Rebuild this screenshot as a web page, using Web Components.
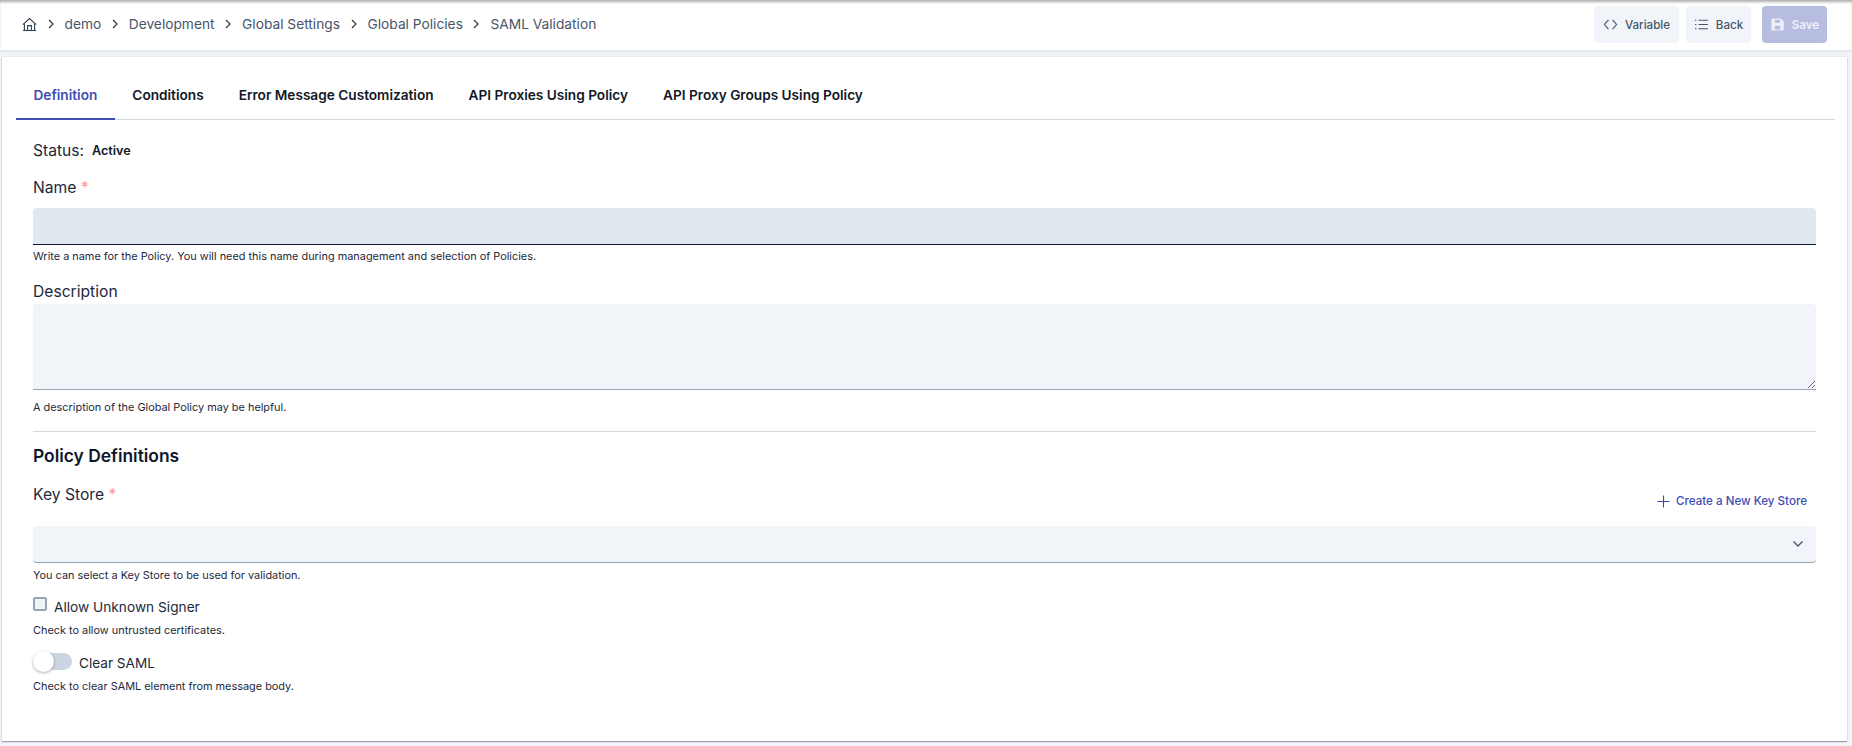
<!DOCTYPE html>
<html lang="en">
<head>
<meta charset="utf-8">
<title>SAML Validation</title>
<style>
  html, body { margin: 0; height: 100%; }
  body {
    background: #f1f5f9;
    font-family: Inter, "Liberation Sans", sans-serif;
    color: #0f172a;
    overflow: hidden;
  }
</style>
</head>
<body>
<policy-page>
  <top-bar slot="top">
    <bread-crumbs>
      <crumb-item>demo</crumb-item>
      <crumb-item>Development</crumb-item>
      <crumb-item>Global Settings</crumb-item>
      <crumb-item>Global Policies</crumb-item>
      <crumb-item>SAML Validation</crumb-item>
    </bread-crumbs>
    <tool-button slot="actions" icon="code" style="width:85px">Variable</tool-button>
    <tool-button slot="actions" icon="list" style="width:65px;margin-left:7px">Back</tool-button>
    <tool-button slot="actions" icon="save" primary style="width:65px;margin-left:11px">Save</tool-button>
  </top-bar>
  <tab-bar>
    <tab-item active>Definition</tab-item>
    <tab-item>Conditions</tab-item>
    <tab-item>Error Message Customization</tab-item>
    <tab-item>API Proxies Using Policy</tab-item>
    <tab-item>API Proxy Groups Using Policy</tab-item>
  </tab-bar>
  <policy-form>
    <status-line>Active</status-line>
    <form-field label="Name" required hint="Write a name for the Policy. You will need this name during management and selection of Policies." style="--top:17px;--gap:11px;--hint-top:4px">
      <text-input focused></text-input>
    </form-field>
    <form-field label="Description" hint="A description of the Global Policy may be helpful." style="--top:18px;--gap:3px;--hint-top:10px">
      <text-area></text-area>
    </form-field>
    <section-title>Policy Definitions</section-title>
    <form-field label="Key Store" required hint="You can select a Key Store to be used for validation." style="--top:18px;--gap:22px;--hint-top:5px">
      <add-link slot="aside">Create a New Key Store</add-link>
      <select-box></select-box>
    </form-field>
    <check-field hint="Check to allow untrusted certificates.">Allow Unknown Signer</check-field>
    <switch-field hint="Check to clear SAML element from message body.">Clear SAML</switch-field>
  </policy-form>
</policy-page>

<script>
const ICONS = {
  home: '<path d="M.8 7.6 7.5 1.5l6.7 6.1"/><path d="M2.4 6.4v7.1h10.2V6.4"/><path d="M1 13.5h13"/><path d="M5.6 13.5V8.6h3.8v4.9"/>',
  code: '<path d="M5.8 3 1.5 8l4.3 5"/><path d="M10.2 3l4.3 5-4.3 5"/>',
  list: '<path d="M4.8 3.5h10M4.8 8h10M4.8 12.5h10"/><path d="M1 3.5h1.6M1 8h1.6M1 12.5h1.6"/>',
  save: '<path fill="currentColor" stroke="none" fill-rule="evenodd" d="M3 1.5h8.6l3 3V13c0 .9-.7 1.5-1.5 1.5H3c-.9 0-1.5-.6-1.5-1.5V3c0-.9.6-1.5 1.5-1.5zM5.2 2.8v3.4h5.4V2.8zM5 9.2v4h6v-4z"/>'
};

class PolicyPage extends HTMLElement {
  constructor() {
    super();
    this.attachShadow({ mode: 'open' });
    this.shadowRoot.innerHTML = `
      <style>
        :host { display: block; }
        .card {
          margin: 7px 5px 0 2px;
          height: 684px;
          box-sizing: border-box;
          background: #fff;
          box-shadow: 0 1px 1px #9a9fa8, 0 0 2px #cbd5e1;
        }
      </style>
      <slot name="top"></slot>
      <div class="card"><slot></slot></div>`;
  }
}

class TopBar extends HTMLElement {
  constructor() {
    super();
    this.attachShadow({ mode: 'open' });
    this.shadowRoot.innerHTML = `
      <style>
        :host {
          display: flex;
          align-items: center;
          justify-content: space-between;
          height: 50px;
          box-sizing: border-box;
          padding: 0 25px 1px 22px;
          background: #fff;
          box-shadow: inset 0 3px 3px -1px #adadad, 0 1px 3px #d5dce5;
        }
        .actions { display: flex; align-items: center; }
      </style>
      <slot></slot>
      <div class="actions"><slot name="actions"></slot></div>`;
  }
}

class BreadCrumbs extends HTMLElement {
  constructor() {
    super();
    this.attachShadow({ mode: 'open' });
    this.shadowRoot.innerHTML = `
      <style>
        :host { display: flex; align-items: center; margin-top: -1px; }
        svg { width: 15px; height: 15px; fill: none; stroke: #334155; stroke-width: 1.1; display: block; }
      </style>
      <svg viewBox="0 0 15 15">${ICONS.home}</svg>
      <slot></slot>`;
  }
}

class CrumbItem extends HTMLElement {
  constructor() {
    super();
    this.attachShadow({ mode: 'open' });
    this.shadowRoot.innerHTML = `
      <style>
        :host { display: flex; align-items: center; font-size: 13.75px; color: #475569; }
        svg { width: 8px; height: 10px; margin: 0 10px 0 9.5px; fill: none; stroke: #334155; stroke-width: 1.3; }
      </style>
      <svg viewBox="0 0 8 10"><path d="M2 1l4 4-4 4"/></svg>
      <slot></slot>`;
  }
}

class ToolButton extends HTMLElement {
  constructor() {
    super();
    this.attachShadow({ mode: 'open' });
    const icon = ICONS[this.getAttribute('icon')];
    this.shadowRoot.innerHTML = `
      <style>
        :host {
          display: flex;
          align-items: center;
          justify-content: center;
          gap: 7px;
          height: 37px;
          border-radius: 4px;
          background: #f1f5f9;
          color: #475569;
          font-size: 11.6px;
          font-weight: 500;
        }
        :host([primary]) { background: #b6bde0; color: #eef0f9; font-weight: 600; }
        svg { width: 15px; height: 15px; fill: none; stroke: currentColor; stroke-width: 1.2; }
      </style>
      <svg viewBox="0 0 16 16">${icon}</svg>
      <slot></slot>`;
  }
}

class TabBar extends HTMLElement {
  constructor() {
    super();
    this.attachShadow({ mode: 'open' });
    this.shadowRoot.innerHTML = `
      <style>
        :host {
          display: flex;
          margin: 0 12px 0 14px;
          height: 63px;
          box-sizing: border-box;
          border-bottom: 1px solid #d3d8e3;
        }
      </style>
      <slot></slot>`;
  }
}

class TabItem extends HTMLElement {
  constructor() {
    super();
    this.attachShadow({ mode: 'open' });
    this.shadowRoot.innerHTML = `
      <style>
        :host {
          display: flex;
          align-items: center;
          box-sizing: border-box;
          height: 63px;
          padding: 15px 17.5px 0;
          font-size: 13.65px;
          font-weight: 600;
          color: #111827;
          border-bottom: 2px solid transparent;
        }
        :host([active]) { color: #3f4db3; border-bottom-color: #3f4db3; }
      </style>
      <slot></slot>`;
  }
}

class PolicyForm extends HTMLElement {
  constructor() {
    super();
    this.attachShadow({ mode: 'open' });
    this.shadowRoot.innerHTML = `
      <style>
        :host { display: block; padding: 0 31px; }
      </style>
      <slot></slot>`;
  }
}

class StatusLine extends HTMLElement {
  constructor() {
    super();
    this.attachShadow({ mode: 'open' });
    this.shadowRoot.innerHTML = `
      <style>
        :host {
          display: flex;
          align-items: center;
          gap: 8px;
          height: 20px;
          margin-top: 20px;
          font-size: 15.6px;
          color: #1e293b;
        }
        b { font-size: 12.6px; font-weight: 600; color: #0f172a; }
      </style>
      <span>Status:</span><b><slot></slot></b>`;
  }
}

class FormField extends HTMLElement {
  constructor() {
    super();
    this.attachShadow({ mode: 'open' });
    const req = this.hasAttribute('required') ? ' <i>*</i>' : '';
    this.shadowRoot.innerHTML = `
      <style>
        :host { display: block; margin-top: var(--top, 17px); }
        .head { display: flex; justify-content: space-between; height: 20px; align-items: center; font-size: 15.65px; color: #1e293b; }
        i { font-style: normal; color: #f59a9a; }
        .body { margin-top: var(--gap, 3px); }
        .hint { margin-top: var(--hint-top, 5px); height: 14px; line-height: 14px; font-size: 10.9px; color: #1e293b; }
      </style>
      <div class="head"><span>${this.getAttribute('label')}${req}</span><slot name="aside"></slot></div>
      <div class="body"><slot></slot></div>
      <div class="hint">${this.getAttribute('hint')}</div>`;
  }
}

class TextInput extends HTMLElement {
  constructor() {
    super();
    this.attachShadow({ mode: 'open' });
    this.shadowRoot.innerHTML = `
      <style>
        :host { display: block; }
        input {
          display: block;
          width: 100%;
          height: 37px;
          box-sizing: border-box;
          border: 0;
          border-bottom: 1px solid #0f172a;
          border-radius: 4px 4px 0 0;
          background: #e2e8f0;
          outline: 0;
        }
      </style>
      <input type="text">`;
  }
}

class TextArea extends HTMLElement {
  constructor() {
    super();
    this.attachShadow({ mode: 'open' });
    this.shadowRoot.innerHTML = `
      <style>
        :host { display: block; }
        textarea {
          display: block;
          width: 100%;
          height: 86px;
          box-sizing: border-box;
          border: 0;
          border-bottom: 1px solid #94a3b8;
          border-radius: 4px 4px 0 0;
          background: #f1f5f9;
          outline: 0;
        }
      </style>
      <textarea></textarea>`;
  }
}

class SectionTitle extends HTMLElement {
  constructor() {
    super();
    this.attachShadow({ mode: 'open' });
    this.shadowRoot.innerHTML = `
      <style>
        :host {
          display: block;
          margin-top: 17px;
          border-top: 1px solid #d3d8e3;
          padding-top: 14px;
          height: 20px;
          line-height: 20px;
          font-size: 17.4px;
          font-weight: 600;
          color: #0f172a;
        }
      </style>
      <slot></slot>`;
  }
}

class AddLink extends HTMLElement {
  constructor() {
    super();
    this.attachShadow({ mode: 'open' });
    this.shadowRoot.innerHTML = `
      <style>
        :host {
          display: flex;
          align-items: center;
          gap: 6px;
          position: relative;
          top: 7px;
          margin-right: 9px;
          font-size: 11.6px;
          font-weight: 500;
          color: #3f4db3;
        }
        svg { width: 13px; height: 13px; fill: none; stroke: #3f4db3; stroke-width: 1.1; }
      </style>
      <svg viewBox="0 0 13 13"><path d="M6.5.5v12M.5 6.5h12"/></svg>
      <slot></slot>`;
  }
}

class SelectBox extends HTMLElement {
  constructor() {
    super();
    this.attachShadow({ mode: 'open' });
    this.shadowRoot.innerHTML = `
      <style>
        :host {
          display: flex;
          align-items: center;
          justify-content: flex-end;
          height: 37px;
          box-sizing: border-box;
          padding-right: 12px;
          border-bottom: 1px solid #94a3b8;
          border-radius: 4px;
          background: #f1f5f9;
        }
        svg { width: 12px; height: 8px; fill: none; stroke: #475569; stroke-width: 1.4; }
      </style>
      <svg viewBox="0 0 12 8"><path d="M1.5 1.5 6 6l4.5-4.5"/></svg>`;
  }
}

class CheckField extends HTMLElement {
  constructor() {
    super();
    this.attachShadow({ mode: 'open' });
    this.shadowRoot.innerHTML = `
      <style>
        :host { display: block; margin-top: 15px; }
        .row { display: flex; align-items: center; height: 20px; font-size: 13.7px; color: #1e293b; }
        .box {
          width: 14px;
          height: 14px;
          box-sizing: border-box;
          border: 2px solid #94a3b8;
          border-radius: 2px;
          background: #f1f5f9;
          margin: -6px 7px 0 0;
        }
        .hint { margin-top: 6px; height: 14px; line-height: 14px; font-size: 10.9px; color: #1e293b; }
      </style>
      <div class="row"><div class="box"></div><slot></slot></div>
      <div class="hint">${this.getAttribute('hint')}</div>`;
  }
}

class SwitchField extends HTMLElement {
  constructor() {
    super();
    this.attachShadow({ mode: 'open' });
    this.shadowRoot.innerHTML = `
      <style>
        :host { display: block; margin-top: 13px; }
        .row { display: flex; align-items: center; height: 22px; font-size: 13.6px; color: #1e293b; }
        .track { width: 39px; height: 17px; border-radius: 9px; background: #cbd5e1; margin-right: 7px; display: flex; align-items: center; }
        .knob { width: 21px; height: 21px; border-radius: 50%; background: #fff; box-shadow: 0 1px 3px rgba(15,23,42,.35); }
        .label { padding-top: 4px; }
        .hint { margin-top: 7px; height: 14px; line-height: 14px; font-size: 10.9px; color: #1e293b; }
      </style>
      <div class="row"><div class="track"><div class="knob"></div></div><div class="label"><slot></slot></div></div>
      <div class="hint">${this.getAttribute('hint')}</div>`;
  }
}

customElements.define('policy-page', PolicyPage);
customElements.define('top-bar', TopBar);
customElements.define('bread-crumbs', BreadCrumbs);
customElements.define('crumb-item', CrumbItem);
customElements.define('tool-button', ToolButton);
customElements.define('tab-bar', TabBar);
customElements.define('tab-item', TabItem);
customElements.define('policy-form', PolicyForm);
customElements.define('status-line', StatusLine);
customElements.define('form-field', FormField);
customElements.define('text-input', TextInput);
customElements.define('text-area', TextArea);
customElements.define('section-title', SectionTitle);
customElements.define('add-link', AddLink);
customElements.define('select-box', SelectBox);
customElements.define('check-field', CheckField);
customElements.define('switch-field', SwitchField);
</script>
</body>
</html>
